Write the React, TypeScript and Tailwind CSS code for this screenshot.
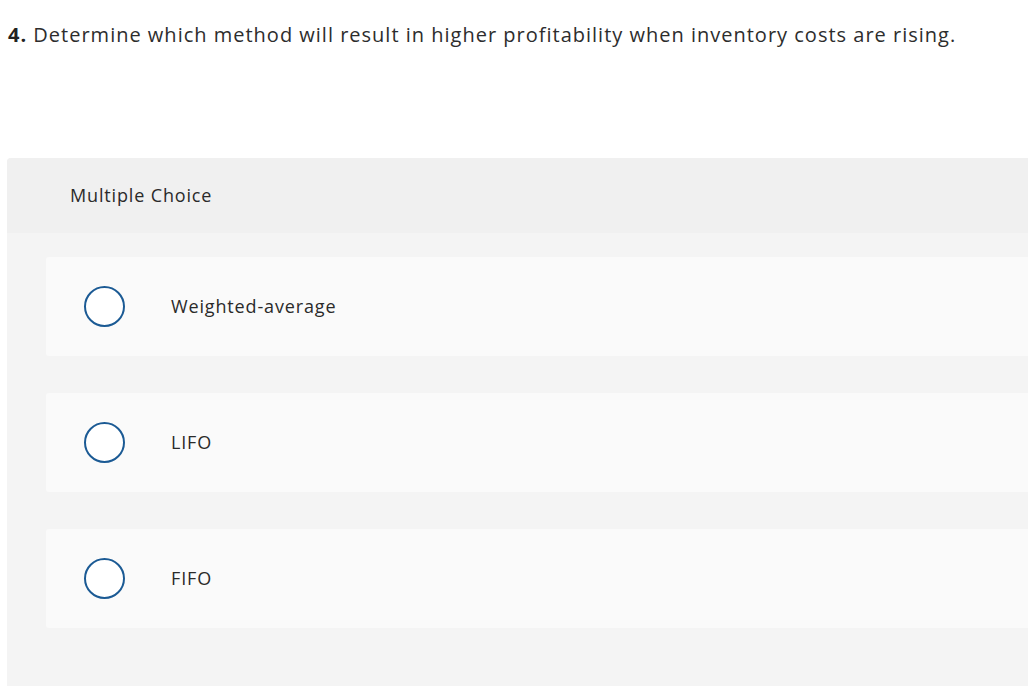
import React from "react";

const options = ["Weighted-average", "LIFO", "FIFO"];

export default function App() {
  return (
    <div className="w-[1028px] h-[686px] overflow-hidden bg-white text-[#222]" style={{ fontFamily: "'Open Sans', Lato, sans-serif" }}>
      <div className="pt-[22px] pl-[8px] h-[158px]">
        <p className="text-[20px] leading-[26px] text-[#2d2d2d] tracking-[1px] whitespace-nowrap">
          <span className="font-bold text-[#222]">4.</span> Determine which method will result in higher profitability when inventory costs are rising.
        </p>
      </div>
      <div className="ml-[7px] w-[1100px] rounded-tl-[4px] bg-[#f4f4f4]">
        <div className="h-[75px] bg-[#f0f0f0] rounded-tl-[4px] flex items-center pl-[63px]">
          <span className="text-[18px] text-[#2a2a2a] tracking-[0.85px]">Multiple Choice</span>
        </div>
        <div className="pl-[39px] pt-[24px] pb-[80px] flex flex-col gap-[37px]">
          {options.map((o) => (
            <div key={o} className="h-[99px] bg-[#fafafa] rounded-l-[3px] flex items-center">
              <div className="ml-[38px] w-[41px] h-[41px] rounded-full border-2 border-[#1b5a94] bg-white" />
              <span className="ml-[46px] text-[18px] text-[#2a2a2a] tracking-[0.85px]">{o}</span>
            </div>
          ))}
        </div>
      </div>
    </div>
  );
}
